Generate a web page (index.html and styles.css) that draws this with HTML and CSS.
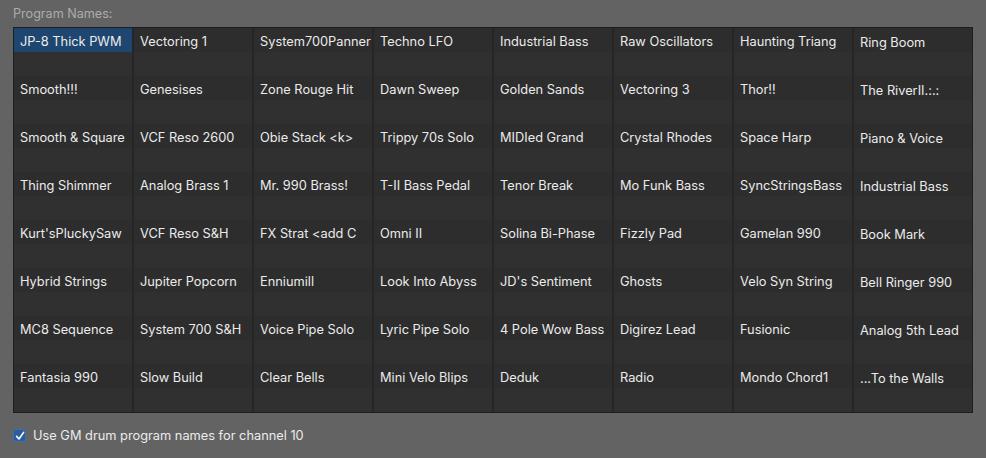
FILE: index.html
```html
<!DOCTYPE html>
<html>
<head>
<meta charset="utf-8">
<link rel="stylesheet" href="styles.css">
</head>
<body>
<div class="panel">
  <div class="label">Program Names:</div>
  <div class="grid">
    <div class="col">
      <div class="cell sel">JP-8 Thick PWM</div>
      <div class="cell">Smooth!!!</div>
      <div class="cell">Smooth &amp; Square</div>
      <div class="cell">Thing Shimmer</div>
      <div class="cell">Kurt'sPluckySaw</div>
      <div class="cell">Hybrid Strings</div>
      <div class="cell">MC8 Sequence</div>
      <div class="cell">Fantasia 990</div>
    </div>
    <div class="col">
      <div class="cell">Vectoring 1</div>
      <div class="cell">Genesises</div>
      <div class="cell">VCF Reso 2600</div>
      <div class="cell">Analog Brass 1</div>
      <div class="cell">VCF Reso S&amp;H</div>
      <div class="cell">Jupiter Popcorn</div>
      <div class="cell">System 700 S&amp;H</div>
      <div class="cell">Slow Build</div>
    </div>
    <div class="col">
      <div class="cell">System700Panner</div>
      <div class="cell">Zone Rouge Hit</div>
      <div class="cell">Obie Stack &lt;k&gt;</div>
      <div class="cell">Mr. 990 Brass!</div>
      <div class="cell">FX Strat &lt;add C</div>
      <div class="cell">Enniumill</div>
      <div class="cell">Voice Pipe Solo</div>
      <div class="cell">Clear Bells</div>
    </div>
    <div class="col">
      <div class="cell">Techno LFO</div>
      <div class="cell">Dawn Sweep</div>
      <div class="cell">Trippy 70s Solo</div>
      <div class="cell">T-II Bass Pedal</div>
      <div class="cell">Omni II</div>
      <div class="cell">Look Into Abyss</div>
      <div class="cell">Lyric Pipe Solo</div>
      <div class="cell">Mini Velo Blips</div>
    </div>
    <div class="col">
      <div class="cell">Industrial Bass</div>
      <div class="cell">Golden Sands</div>
      <div class="cell">MIDIed Grand</div>
      <div class="cell">Tenor Break</div>
      <div class="cell">Solina Bi-Phase</div>
      <div class="cell">JD's Sentiment</div>
      <div class="cell">4 Pole Wow Bass</div>
      <div class="cell">Deduk</div>
    </div>
    <div class="col">
      <div class="cell">Raw Oscillators</div>
      <div class="cell">Vectoring 3</div>
      <div class="cell">Crystal Rhodes</div>
      <div class="cell">Mo Funk Bass</div>
      <div class="cell">Fizzly Pad</div>
      <div class="cell">Ghosts</div>
      <div class="cell">Digirez Lead</div>
      <div class="cell">Radio</div>
    </div>
    <div class="col">
      <div class="cell">Haunting Triang</div>
      <div class="cell">Thor!!</div>
      <div class="cell">Space Harp</div>
      <div class="cell">SyncStringsBass</div>
      <div class="cell">Gamelan 990</div>
      <div class="cell">Velo Syn String</div>
      <div class="cell">Fusionic</div>
      <div class="cell">Mondo Chord1</div>
    </div>
    <div class="col last">
      <div class="cell">Ring Boom</div>
      <div class="cell">The RiverII.:.:</div>
      <div class="cell">Piano &amp; Voice</div>
      <div class="cell">Industrial Bass</div>
      <div class="cell">Book Mark</div>
      <div class="cell">Bell Ringer 990</div>
      <div class="cell">Analog 5th Lead</div>
      <div class="cell">...To the Walls</div>
    </div>
  </div>
  <label class="check">
    <span class="box"><svg width="10" height="10" viewBox="0 0 10 10"><path d="M1.6 5.4 L4 8 L8.6 1.4" fill="none" stroke="#ffffff" stroke-width="1.6" stroke-linecap="round" stroke-linejoin="round"/></svg></span>
    <span class="check-text">Use GM drum program names for channel 10</span>
  </label>
</div>
</body>
</html>
```

FILE: styles.css
```css
html, body {
  margin: 0;
  padding: 0;
  background: #636363;
}
body {
  font-family: Inter, "Liberation Sans", Arial, sans-serif;
  font-size: 12.8px;
  color: #ebebeb;
  width: 986px;
  height: 458px;
  overflow: hidden;
}
.panel {
  padding: 6px 13px 0 13px;
  display: flex;
  flex-direction: column;
}
.label {
  height: 15px;
  line-height: 15px;
  font-size: 12.6px;
  color: #acacac;
  margin-bottom: 6px;
}
.grid {
  width: 958px;
  border: 1px solid #1e1e1e;
  background: #262626;
  display: flex;
  gap: 2px;
}
.col {
  width: 118px;
  display: flex;
  flex-direction: column;
  background: repeating-linear-gradient(to bottom, #2d2d2d 0, #2d2d2d 24px, #303030 24px, #303030 48px);
}
.cell {
  height: 48px;
  box-sizing: border-box;
  padding: 6px 0 0 6px;
  line-height: 15px;
  white-space: nowrap;
  overflow: hidden;
}
.cell.sel {
  background: linear-gradient(to bottom, #1e4670 0, #1e4670 24px, transparent 24px);
}
.col.last .cell {
  padding-top: 7px;
}
.check {
  display: flex;
  align-items: center;
  gap: 7px;
  margin-top: 15px;
  color: #ebebeb;
}
.box {
  width: 13px;
  height: 13px;
  box-sizing: border-box;
  border-radius: 3px;
  background: #2c5c9c;
  border: 1px solid #3a6fb5;
  display: flex;
  align-items: center;
  justify-content: center;
}
.check-text {
  line-height: 15px;
}
```
